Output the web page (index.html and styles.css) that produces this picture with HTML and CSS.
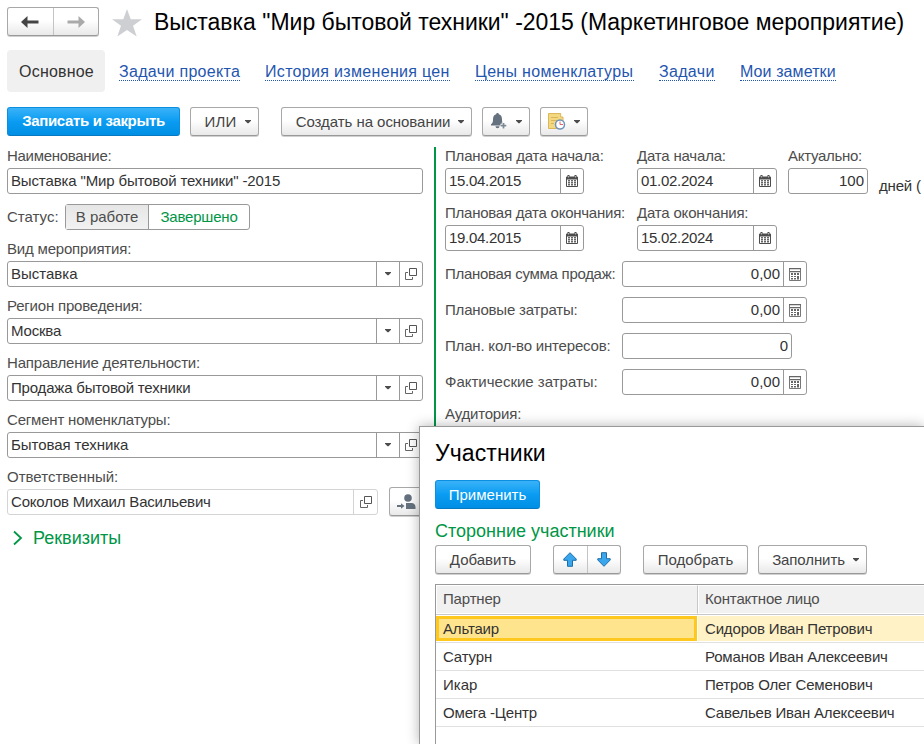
FILE: index.html
```html
<!DOCTYPE html>
<html lang="ru">
<head>
<meta charset="utf-8">
<title>Выставка "Мир бытовой техники" -2015</title>
<link rel="stylesheet" href="styles.css">
</head>
<body>
<svg class="defs" width="0" height="0">
  <symbol id="cal" viewBox="0 0 12 12"><path d="M1 1.500h10a1 1 0 0 1 1 1V11a1 1 0 0 1-1 1H1a1 1 0 0 1-1-1V2.500a1 1 0 0 1 1-1z" fill="#4d4d4d"/><path d="M2.500 0v2M9.500 0v2" stroke="#4d4d4d" stroke-width="2"/><path d="M2.500 1v1.500M9.500 1v1.500" stroke="#ddd" stroke-width=".7"/><path d="M1 4.500h10V11H1z" fill="#fff"/><path d="M2 5h2v1.500H2zM5 5h2v1.500H5zM8 5h2v1.500H8zM2 7h2v1.500H2zM5 7h2v1.500H5zM8 7h2v1.500H8zM2 9h2v1.500H2zM5 9h2v1.500H5zM8 9h2v1.500H8z" fill="#666"/></symbol>
  <symbol id="calc" viewBox="0 0 12 13"><path d="M.5.5h11v12H.5z" fill="#fff" stroke="#777"/><path d="M0 0h12v1.300H0zM1 3h10v1.200H1z" fill="#666"/><path d="M2 5h2v2H2zM5 5h2v2H5zM8 5h2v2H8zM2 8h2v1H2zM5 8h2v1H5zM2 10h2v1.500H2zM5 10h2v1.500H5zM8 8h2v3.500H8z" fill="#666"/></symbol>
  <symbol id="open" viewBox="0 0 12 12"><path d="M4.500.5h7v7h-7z" fill="#fff" stroke="#555"/><path d="M3 4.500H.5v7h7V9" fill="none" stroke="#666"/></symbol>
  <symbol id="down" viewBox="0 0 6 4"><path d="M0 0h6v.7L3.500 3.300h-1L0 .7z" fill="#4d4d4d"/></symbol>
  <symbol id="arrow" viewBox="0 0 14 15"><path d="M7 .7 13.200 7v1.300H9.500v6h-5v-6H.8V7z" fill="#3aa6ee" stroke="#1b6ea8" stroke-width="1"/></symbol>
</svg>
<main class="window">
  <header class="head">
    <div class="btn group nav">
      <span class="seg"><svg width="18" height="12" viewBox="0 0 18 12"><path d="M0 6 6.500 0v12z" fill="#444"/><path d="M5 6h12.500" stroke="#444" stroke-width="3"/></svg></span>
      <span class="seg"><svg width="18" height="12" viewBox="0 0 18 12"><path d="M18 6 11.500 0v12z" fill="#aaa"/><path d="M.5 6H13" stroke="#aaa" stroke-width="3"/></svg></span>
    </div>
    <svg class="star" width="30" height="28" viewBox="0 0 30 28"><path d="M15 0l3.700 10.200H30l-9 6.600L24.700 27.500 15 21l-9.700 6.500L9 16.800 0 10.200h11.300z" fill="#cdcfd2"/></svg>
    <h1>Выставка "Мир бытовой техники" -2015 (Маркетинговое мероприятие)</h1>
  </header>
  <nav class="tabs">
    <span class="tab">Основное</span>
    <a class="l1">Задачи проекта</a><a class="l2">История изменения цен</a><a class="l3">Цены номенклатуры</a><a class="l4">Задачи</a><a class="l5">Мои заметки</a>
  </nav>
  <div class="toolbar">
    <button class="btn primary save">Записать и закрыть</button>
    <button class="btn or">ИЛИ<svg class="dd"><use href="#down"/></svg></button>
    <button class="btn create">Создать на основании<svg class="dd"><use href="#down"/></svg></button>
    <button class="btn icon"><svg width="18" height="17" viewBox="0 0 18 17"><path d="M7.500 0c.8 0 1.200.5 1.300 1.200C11.500 2 12 4.300 12 6.500c0 2.500.5 3.700 2 4.800v1.200H1v-1.200c1.500-1.100 2-2.300 2-4.800C3 4.300 3.500 2 6.200 1.200 6.300.5 6.700 0 7.500 0zM5.500 13.300h4a2 2 0 0 1-4 0z" fill="#66717f"/><path d="M13.500 9.500v6M10.500 12.500h6" stroke="#fff" stroke-width="3.500"/><path d="M13.500 10v5.500M10.700 12.700h5.600" stroke="#7d8996" stroke-width="1.800"/></svg><svg class="dd"><use href="#down"/></svg></button>
    <button class="btn icon"><svg width="18" height="17" viewBox="0 0 18 17"><path d="M.5.5h12.200V4H15v11.500H.5z" fill="#f3d881" stroke="#dcb75a"/><path d="M3 4.500h7M3 7.500h7M3 10.500h3" stroke="#d8b659"/><circle cx="12" cy="11.500" r="4.500" fill="#fff" stroke="#6f93bd" stroke-width="1.500"/><path d="M12 8.500v3h3" fill="none" stroke="#d66"/></svg><svg class="dd"><use href="#down"/></svg></button>
  </div>
  <div class="form">
    <section class="left">
      <label class="tight">Наименование:</label>
      <div class="field"><span class="val name">Выставка "Мир бытовой техники" -2015</span></div>
      <div class="status"><span class="cap norm">Статус:</span><div class="switch"><span class="on">В работе</span><span class="off">Завершено</span></div></div>
      <label>Вид мероприятия:</label>
      <div class="field"><span class="val norm">Выставка</span><i><svg class="dd"><use href="#down"/></svg></i><i><svg class="op"><use href="#open"/></svg></i></div>
      <label>Регион проведения:</label>
      <div class="field"><span class="val">Москва</span><i><svg class="dd"><use href="#down"/></svg></i><i><svg class="op"><use href="#open"/></svg></i></div>
      <label>Направление деятельности:</label>
      <div class="field"><span class="val">Продажа бытовой техники</span><i><svg class="dd"><use href="#down"/></svg></i><i><svg class="op"><use href="#open"/></svg></i></div>
      <label>Сегмент номенклатуры:</label>
      <div class="field"><span class="val seg-name">Бытовая техника</span><i><svg class="dd"><use href="#down"/></svg></i><i><svg class="op"><use href="#open"/></svg></i></div>
      <label class="norm">Ответственный:</label>
      <div class="person"><div class="field pale"><span class="val">Соколов Михаил Васильевич</span><i><svg class="op"><use href="#open"/></svg></i></div>
        <button class="btn who"><svg width="19" height="16" viewBox="0 0 19 16"><circle cx="11" cy="4" r="3.800" fill="#66717f"/><path d="M9 9h5.500c2.500 0 4 2 4 4v2H9z" fill="#66717f"/><path d="M0 12h5" stroke="#66717f" stroke-width="2"/><path d="M4 9.300 7.500 12 4 14.700z" fill="#66717f"/></svg></button></div>
      <div class="more"><svg width="10" height="16" viewBox="0 0 10 16"><path d="M1 1.500 8 8l-7 6.500" fill="none" stroke="#009646" stroke-width="1.800"/></svg>Реквизиты</div>
    </section>
    <section class="right">
      <div class="dates">
        <div class="cell"><label>Плановая дата начала:</label><div class="field date"><span class="val tight">15.04.2015</span><i><svg class="ca"><use href="#cal"/></svg></i></div></div>
        <div class="cell"><label>Дата начала:</label><div class="field date wide"><span class="val tight">01.02.2024</span><i><svg class="ca"><use href="#cal"/></svg></i></div></div>
        <div class="cell"><label class="tight">Актуально:</label><div class="field days num"><span class="val norm">100</span></div></div>
        <span class="unit">дней (</span>
      </div>
      <div class="dates">
        <div class="cell"><label class="plan-end">Плановая дата окончания:</label><div class="field date"><span class="val tight">19.04.2015</span><i><svg class="ca"><use href="#cal"/></svg></i></div></div>
        <div class="cell"><label>Дата окончания:</label><div class="field date wide"><span class="val tight">15.02.2024</span><i><svg class="ca"><use href="#cal"/></svg></i></div></div>
      </div>
      <div class="sum"><span class="cap tight">Плановая сумма продаж:</span><div class="field num"><span class="val">0,00</span><i><svg class="cc"><use href="#calc"/></svg></i></div></div>
      <div class="sum"><span class="cap">Плановые затраты:</span><div class="field num"><span class="val">0,00</span><i><svg class="cc"><use href="#calc"/></svg></i></div></div>
      <div class="sum"><span class="cap">План. кол-во интересов:</span><div class="field num short"><span class="val">0</span></div></div>
      <div class="sum"><span class="cap norm">Фактические затраты:</span><div class="field num"><span class="val">0,00</span><i><svg class="cc"><use href="#calc"/></svg></i></div></div>
      <label class="aud">Аудитория:</label>
    </section>
  </div>
</main>
<aside class="popup">
  <h2>Участники</h2>
  <button class="btn primary apply">Применить</button>
  <h3>Сторонние участники</h3>
  <div class="tools">
    <button class="btn add">Добавить</button>
    <div class="btn group move"><span class="seg"><svg width="14" height="15"><use href="#arrow"/></svg></span><span class="seg"><svg class="flip" width="14" height="15"><use href="#arrow"/></svg></span></div>
    <button class="btn pick">Подобрать</button>
    <button class="btn fill">Заполнить<svg class="dd"><use href="#down"/></svg></button>
  </div>
  <div class="table">
    <div class="tr th"><span>Партнер</span><span>Контактное лицо</span></div>
    <div class="tr sel"><span>Альтаир</span><span>Сидоров Иван Петрович</span></div>
    <div class="tr"><span>Сатурн</span><span>Романов Иван Алексеевич</span></div>
    <div class="tr"><span class="norm">Икар</span><span>Петров Олег Семенович</span></div>
    <div class="tr"><span>Омега -Центр</span><span>Савельев Иван Алексеевич</span></div>
  </div>
</aside>
</body>
</html>
```
FILE: styles.css
```css
* { box-sizing: border-box; }
body { margin: 0; width: 924px; height: 744px; overflow: hidden; position: relative; background: #fff; color: #333; font: 15px/20px "Liberation Sans", Arial, sans-serif; }
.defs { position: absolute; }
svg { display: block; flex: none; }
h1, h2, h3 { margin: 0; font-weight: 400; color: #000; white-space: nowrap; }
.window { height: 744px; padding: 7px 0 0 7px; overflow: hidden; }
.btn { display: flex; align-items: center; justify-content: center; height: 29px; padding: 0; border: 1px solid #a8a8a8; border-bottom-color: #999; border-radius: 3px; background: linear-gradient(#fff 0%, #fff 45%, #e9e9e9 100%); box-shadow: 0 1px 0 #d0d0d0; color: #444; font: inherit; white-space: nowrap; flex: none; }
.group .seg { flex: 1; height: 100%; display: flex; align-items: center; justify-content: center; }
.seg + .seg { border-left: 1px solid #c4c4c4; }
.primary { border-color: #0b8fe0; border-bottom-color: #0779c0; background: linear-gradient(#3ab2f8, #0a9cf2 50%, #008fe5); color: #fff; box-shadow: none; }
.dd { width: 6px; height: 4px; }
.op, .ca { width: 12px; height: 12px; }
.cc { width: 12px; height: 13px; }

.head { display: flex; height: 30px; }
.nav { width: 92px; }
.nav .seg { padding-top: 1px; }
.star { margin: 2px 0 0 13px; }
h1 { margin-left: 12px; font-size: 23px; line-height: 31px; letter-spacing: -.015px; }

.tabs { display: flex; margin-top: 13px; height: 42px; align-items: center; font-size: 16px; letter-spacing: .32px; }
.tab { width: 98px; height: 42px; line-height: 43px; padding-left: 1px; text-align: center; background: #f0f0f0; border-radius: 4px; color: #333; letter-spacing: .2px; }
.tabs a { color: #1f56b0; line-height: 17px; margin-top: 1px; border-bottom: 1px dotted #1f56b0; white-space: nowrap; }
.l1 { width: 121px; margin-left: 14px; }
.l2 { width: 185px; margin-left: 25px; }
.l3 { width: 159px; margin-left: 25px; }
.l4 { width: 56px; margin-left: 25px; }
.l5 { width: 96px; margin-left: 25px; letter-spacing: .1px; }

.toolbar { display: flex; margin-top: 15px; }
.save { width: 173px; font-weight: 700; letter-spacing: -.33px; padding-bottom: 1px; }
.or { width: 69px; margin-left: 10px; padding-left: 6px; letter-spacing: .2px; }
.create { width: 191px; margin-left: 22px; padding-left: 7px; letter-spacing: -.05px; }
.icon { width: 48px; margin-left: 10px; }
.toolbar .dd { margin-left: 8px; }

.form { display: flex; margin-top: 10px; letter-spacing: -.19px; }
.left { width: 416px; flex: none; }
label { display: block; height: 22px; line-height: 20px; color: #4d4d4d; white-space: nowrap; }
.cap { color: #4d4d4d; white-space: nowrap; }
.tight { letter-spacing: -.29px; }
.norm { letter-spacing: 0; }
.name { letter-spacing: -.14px; }
.seg-name { letter-spacing: -.06px; }
.plan-end { letter-spacing: -.24px; }
.field { display: flex; height: 26px; border: 1px solid #999; border-radius: 3px; background: #fff; }
.field .val { flex: 1; padding: 0 3px; line-height: 24px; white-space: nowrap; }
.field i { width: 23px; border-left: 1px solid #999; display: flex; align-items: center; justify-content: center; }
.field + label { margin-top: 9px; }
.num { text-align: right; letter-spacing: 0; }
.num .val { letter-spacing: 0; }
.status { display: flex; align-items: center; margin: 10px 0 9px; }
.status .cap { width: 58px; }
.switch { display: flex; width: 185px; height: 26px; border: 1px solid #999; border-radius: 3px; line-height: 24px; text-align: center; }
.on { width: 83px; background: linear-gradient(#e6e6e6, #f2f2f2); border-right: 1px solid #999; color: #4d4d4d; letter-spacing: 0; }
.off { flex: 1; color: #009646; }
.person { display: flex; height: 26px; }
.pale { width: 371px; flex: none; border-color: #d4d4d4; }
.pale i { border-color: #d4d4d4; width: 24px; }
.who { width: 40px; margin: -2px 0 0 11px; padding-right: 5px; }
.more { display: flex; align-items: center; gap: 10px; margin: 12px 0 0 6px; color: #009646; font-size: 18px; height: 22px; letter-spacing: 0; }

.right { width: 490px; flex: none; margin-left: 11px; padding-left: 9px; border-left: 2px solid #009646; height: 290px; margin-top: 1px; }
.right > :first-child { margin-top: -1px; }
.dates { display: flex; height: 48px; margin-bottom: 9px; }
.cell { flex: none; }
.cell:nth-child(1) { width: 192px; }
.cell:nth-child(2) { width: 151px; }
.date { width: 139px; }
.wide { width: 140px; }
.days { width: 80px; }
.unit { margin: 30px 0 0 11px; white-space: nowrap; }
.sum { display: flex; align-items: center; margin-top: 10px; }
.sum .cap { width: 177px; flex: none; }
.sum .field { width: 185px; }
.sum .short { width: 170px; }
.aud { margin-top: 9px; }

.popup { position: absolute; left: 419px; top: 426px; width: 505px; height: 318px; overflow: hidden; padding: 10px 0 0 15px; background: #fff; border: solid #999; border-width: 1px 0 0 1px; box-shadow: 0 0 12px rgba(0,0,0,.3); }
h2 { font-size: 23px; line-height: 32px; letter-spacing: .1px; }
.apply { width: 105px; margin-top: 11px; }
h3 { margin-top: 11px; color: #009646; font-size: 18px; line-height: 22px; }
.tools { display: flex; margin-top: 3px; }
.add { width: 96px; }
.move { width: 68px; margin-left: 22px; }
.flip { transform: rotate(180deg); }
.pick { width: 105px; margin-left: 22px; }
.fill { width: 109px; margin-left: 10px; padding-left: 6px; gap: 8px; letter-spacing: -.1px; }
.table { margin-top: 10px; border: solid #999; border-width: 1px 0 0 1px; height: 200px; letter-spacing: -.17px; }
.tr { display: flex; height: 28px; border-bottom: 1px solid #e0e0e0; line-height: 27px; white-space: nowrap; }
.tr span:first-child { width: 261px; padding-left: 7px; }
.tr span:last-child { flex: 1; padding-left: 8px; }
.th { height: 30px; line-height: 26px; border-color: #c8c8c8; color: #4d4d4d; }
.th span { background: #f1f1f1; border: 1px solid #fff; }
.th span:first-child { width: 262px; padding-left: 6px; border-right: 1px solid #c8c8c8; }
.th span:last-child { padding-left: 6px; border-right: 0; }
.tr.sel { padding: 1px 0; line-height: 25px; }
.sel span:first-child { border: 3px solid #ffc81e; background: #ffe48e; padding-left: 4px; line-height: 19px; }
.sel span:last-child { background: #fff2c6; margin-left: 1px; padding-left: 7px; }
```
